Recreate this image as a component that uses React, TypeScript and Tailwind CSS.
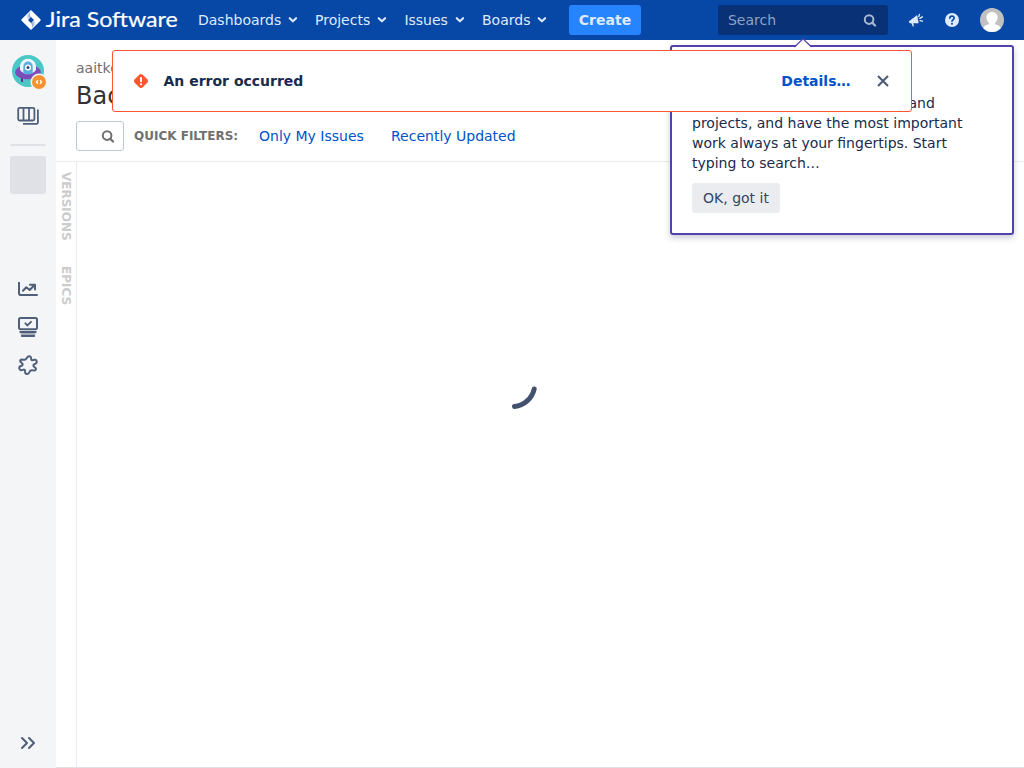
import React from "react";

function NavItem({ label, className }: { label: string; className: string }) {
  return (
    <div className={`flex h-10 shrink-0 items-center justify-between text-[14px] text-[#deebff] ${className}`}>
      <span>{label}</span>
      <svg width="10" height="10" viewBox="0 0 10 10" fill="none" stroke="#deebff" strokeWidth="2.1" strokeLinecap="round" strokeLinejoin="round">
        <path d="M1.7 3.2 4.9 6.3 8.1 3.2" />
      </svg>
    </div>
  );
}

function SearchIcon({ color }: { color: string }) {
  return (
    <svg width="14" height="14" viewBox="0 0 14 14" fill="none" stroke={color} strokeWidth="2" strokeLinecap="round">
      <circle cx="6.1" cy="6.6" r="4.3" />
      <path d="M9.3 9.8 12 12.5" strokeWidth="2.3" />
    </svg>
  );
}

function Logo() {
  return (
    <div className="flex h-10 w-[177px] shrink-0 items-center pl-[21px]">
      <svg width="20" height="20" viewBox="0 0 20 20" className="shrink-0">
        <defs>
          <linearGradient id="fade-a" x1="1" y1="0.4" x2="0" y2="0.7">
            <stop offset="0" stopColor="#0747a6" />
            <stop offset="1" stopColor="#ffffff" />
          </linearGradient>
          <linearGradient id="fade-b" x1="0" y1="0.6" x2="1" y2="0.3">
            <stop offset="0" stopColor="#0747a6" />
            <stop offset="1" stopColor="#ffffff" />
          </linearGradient>
        </defs>
        <path fill="#fff" d="M10 0 19.4 9.3Q20 10 19.4 10.7L10 20 .6 10.7Q0 10 .6 9.3ZM10 7 7 10 10 13 13 10Z" />
        <path fill="url(#fade-a)" d="M10 7Q7.8 4.8 9.6 1.8L5 6.4 7 10Z" opacity="0.6" />
        <path fill="url(#fade-b)" d="M10 13Q12.2 15.2 10.4 18.2L15 13.6 13 10Z" opacity="0.6" />
      </svg>
      <svg width="138" height="32" viewBox="0 0 138 32" className="shrink-0 overflow-visible">
        <text x="4.8" y="23" fill="#fff" stroke="#fff" strokeWidth="0.2" textLength="132" lengthAdjust="spacingAndGlyphs" className="font-['Lato',sans-serif] text-[22px]">
          Jira Software
        </text>
      </svg>
    </div>
  );
}

function Header() {
  return (
    <header className="flex h-10 shrink-0 items-center bg-[#0747a6]">
      <Logo />
      <NavItem label="Dashboards" className="ml-[21px] w-[100px]" />
      <NavItem label="Projects" className="ml-[17px] w-[72px]" />
      <NavItem label="Issues" className="ml-[17.4px] w-[60.6px]" />
      <NavItem label="Boards" className="ml-[17px] w-[65px]" />
      <button className="ml-[22px] h-[30px] w-[72px] shrink-0 rounded-[3px] bg-[#2684ff] text-[14px] font-bold text-[#deebff]">Create</button>
      <div className="ml-[77px] flex h-[30px] w-[170px] shrink-0 items-center justify-between rounded-[3px] bg-[#093176] pr-[11px] pl-[10px] text-[14px] text-[#8ca3c8]">
        <span>Search</span>
        <SearchIcon color="#a6b8d5" />
      </div>
      <svg width="16" height="16" viewBox="0 0 16 16" className="ml-5 shrink-0" fill="#deebff">
        <path d="M1 9.6 9 3.6 10.3 11 1.8 10.9Z" stroke="#deebff" strokeWidth="0.6" strokeLinejoin="round" />
        <path d="M3.4 11 5 11 6 14.2 4.7 14.5Z" />
        <path d="M10.8 4.6 11.5 2.4M11.9 6.3 14.3 4.8M12.1 8.6 14.5 9.1" stroke="#deebff" strokeWidth="1.4" strokeLinecap="round" />
      </svg>
      <svg width="14" height="14" viewBox="0 0 14 14" className="ml-[21px] shrink-0">
        <circle cx="7" cy="7" r="7" fill="#deebff" />
        <path d="M4.8 5.3C4.8 2.4 9.2 2.4 9.2 5.1 9.2 6.8 7 6.7 7 8.3" fill="none" stroke="#0747a6" strokeWidth="1.6" strokeLinecap="round" />
        <circle cx="7" cy="10.8" r="1" fill="#0747a6" />
      </svg>
      <svg width="24" height="24" viewBox="0 0 24 24" className="ml-[21px] shrink-0">
        <defs>
          <clipPath id="avatar-round"><circle cx="12" cy="12" r="12" /></clipPath>
        </defs>
        <g clipPath="url(#avatar-round)">
          <rect width="24" height="24" fill="#c1c1c1" />
          <path d="M12 4C8.3 4 6.3 6.6 6.4 9.6 6.5 12.1 7.8 14 9 15.2V16.3C6.5 17.1 4 17.6 3.3 20V24H20.7V20C20 17.6 17.5 17.1 15 16.3V15.2C16.2 14 17.5 12.1 17.6 9.6 17.7 6.6 15.7 4 12 4Z" fill="#fff" />
        </g>
      </svg>
    </header>
  );
}

function ProjectAvatar() {
  return (
    <svg width="36" height="36" viewBox="0 0 36 36" className="mt-[14px] ml-1 shrink-0">
      <circle cx="16" cy="17" r="16" fill="#4bc8c5" />
      <path d="M10 22V28M21.5 24 22 28" stroke="#5b3399" strokeWidth="2" />
      <path d="M8 12.5C4.7 14 3 16.5 3.2 18.7 3.5 22.8 9.5 25.2 16 25.2S28.5 22.8 28.8 18.7C29 16.5 27.3 14 24 12.5Z" fill="#7e4cba" />
      <path d="M8 12A8 7.2 0 0 1 24 12V15.6Q22.5 19.5 16 19.9 9.5 19.5 8 15.6Z" fill="#edf4fb" />
      <path d="M11.3 19.5V12.4A4.7 4.8 0 0 1 20.7 12.4V19.5Q16 21.4 11.3 19.5Z" fill="#5aaddf" />
      <circle cx="16" cy="13.5" r="3" fill="#fff" />
      <circle cx="16" cy="13.5" r="1.5" fill="#244a6d" />
      <circle cx="27" cy="28" r="8.5" fill="#f4f5f7" />
      <circle cx="27" cy="28" r="7" fill="#f7922e" />
      <path d="M26 26.1 24.4 28 26 29.9M28 26.1 29.6 28 28 29.9" fill="none" stroke="#fff" strokeWidth="1.3" />
    </svg>
  );
}

function Sidebar() {
  return (
    <aside className="flex w-14 shrink-0 flex-col items-center bg-[#f4f5f7]">
      <ProjectAvatar />
      <svg width="24" height="20" viewBox="0 0 24 20" className="mt-4 shrink-0" fill="none" stroke="#505f79" strokeWidth="1.8">
        <rect x="2.2" y="1.8" width="16.2" height="12.7" rx="1.4" />
        <path d="M7.5 2V14.5M13 2V14.5M21.9 3.5V16.4Q21.9 17.9 20.4 17.9H7" />
      </svg>
      <div className="mt-[18px] h-0.5 w-9 shrink-0 rounded-full bg-[#dfe1e6]" />
      <div className="mt-[10px] h-[38px] w-9 shrink-0 rounded-[3px] bg-[#dfe1e6]" />
      <svg width="24" height="24" viewBox="0 0 24 24" className="mt-[83px] shrink-0" fill="none" stroke="#505f79" strokeWidth="2" strokeLinecap="round">
        <path d="M3 5.7V16.2Q3 18 4.8 18H21" />
        <path d="M7 13.8 10.3 10.2 13.7 13 18.6 8M14 7.7H19V12.4" strokeLinejoin="round" />
      </svg>
      <svg width="24" height="24" viewBox="0 0 24 24" className="mt-[14px] shrink-0" fill="none" stroke="#505f79" strokeLinecap="round">
        <rect x="3" y="3" width="18" height="11.2" rx="1.6" strokeWidth="2" />
        <path d="M9.4 8.4 11.4 10.4 15 6.9" strokeWidth="2" />
        <path d="M5.5 19H18.5" stroke="#a5adba" strokeWidth="2" />
        <path d="M4.3 17H19.7M5.8 21H18.2" strokeWidth="2" />
      </svg>
      <svg width="24" height="24" viewBox="0 0 24 24" className="mt-[14px] shrink-0" fill="none" stroke="#505f79" strokeWidth="2" strokeLinejoin="round">
        <path d="M11.3 4.2C12.2 2.6 14.9 3 15.1 5C15.1 6.5 15.2 7.5 16.8 7.2C18.6 6.1 20.3 6.7 20.7 8.3C21.1 10 20 10.7 18.4 11.1C17.1 11.6 17.1 12.8 18.1 13.8L19.6 15.1C20.3 15.9 19.9 17.2 18.8 17.4L16.6 17.2C15 17 14 17.4 13.6 18.8C13.1 20.3 12.4 21.3 10.8 21C9.2 20.8 8.8 19.6 9.1 18.2C9.2 16.9 8.3 16.3 7.1 16.8C5.2 17.6 3.7 17.2 3.3 15.6C3 14 4 13.1 5.6 12.8C7 12.2 6.9 11.1 5.8 10.1L4.5 8.8C3.8 8 4.2 6.8 5.4 6.6L7.7 6.8C9.3 7 10.1 6.6 10.5 5.4Z" />
      </svg>
      <svg width="16" height="14" viewBox="0 0 16 14" className="mt-auto mb-[18px] shrink-0" fill="none" stroke="#505f79" strokeWidth="2" strokeLinecap="round" strokeLinejoin="round">
        <path d="M2 2 7 7 2 12M9 2 14 7 9 12" />
      </svg>
    </aside>
  );
}

function Backlog() {
  return (
    <main className="flex min-w-0 flex-1 flex-col border-b border-[#dfe1e6]">
      <div className="flex h-[122px] shrink-0 flex-col border-b border-[#ebecf0] pl-5">
        <div className="mt-[18px] h-5 text-[14px] leading-5 text-[#707070]">aaitken</div>
        <h1 className="mt-1 h-7 text-[24px] leading-7 text-[#333]">Backlog</h1>
        <div className="mt-[11px] flex h-[30px] items-center text-[14px] text-[#0052cc]">
          <div className="flex h-[30px] w-12 items-center justify-end rounded-[3px] border border-[#c1c7d0] pr-2">
            <SearchIcon color="#707070" />
          </div>
          <span className="ml-[10px] w-[125px] text-[12px] font-bold text-[#707070]">QUICK FILTERS:</span>
          <span className="w-[132px]">Only My Issues</span>
          <span>Recently Updated</span>
        </div>
      </div>
      <div className="flex min-h-0 flex-1">
        <div className="flex w-[21px] shrink-0 flex-col border-r border-[#ebecf0] pt-[10px] text-[12px] font-bold text-[#ccc]">
          <span className="h-[94px] w-5 leading-5 [writing-mode:vertical-rl]">VERSIONS</span>
          <span className="w-5 leading-5 [writing-mode:vertical-rl]">EPICS</span>
        </div>
        <div className="flex-1 pt-[223px] pl-[434px]">
          <svg width="28" height="28" viewBox="0 0 28 28" fill="none" stroke="#42526e" strokeWidth="5" strokeLinecap="round">
            <path d="M3.5 21.5A22.5 22.5 0 0 0 23.2 4" />
          </svg>
        </div>
      </div>
    </main>
  );
}

function SearchHint() {
  return (
    <section className="absolute top-[45px] left-[670px] h-[190px] w-[344px] rounded-[3px] border-2 border-[#5243aa] bg-white px-5 pt-[46px] text-[14px] leading-5 text-[#172b4d] shadow-[0_3px_6px_rgba(9,30,66,0.22)]">
      <svg width="18" height="10" viewBox="0 0 18 10" className="absolute -top-[9px] left-[122px]">
        <path d="M1 9 9 1 17 9V10H1Z" fill="#fff" />
        <path d="M.5 9 9 .8 17.5 9" fill="none" stroke="#5243aa" strokeWidth="1.2" />
      </svg>
      <p className="indent-[216.5px]">
        and<br />projects, and have the most important<br />work always at your fingertips. Start<br />typing to search…
      </p>
      <button className="mt-[10px] h-[30px] w-[88px] rounded-[3px] bg-[#ebecf0] text-[#344563]">OK, got it</button>
    </section>
  );
}

function ErrorFlag() {
  return (
    <section className="absolute top-[50px] left-28 flex h-[62px] w-[800px] items-center rounded-[3px] border border-[#ff5630] bg-white text-[14px] font-bold">
      <svg width="16" height="16" viewBox="0 0 16 16" className="ml-5">
        <path d="M6.5 1.5Q8 .3 9.5 1.5L14.5 6.5Q15.7 8 14.5 9.5L9.5 14.5Q8 15.7 6.5 14.5L1.5 9.5Q.3 8 1.5 6.5Z" fill="#ff5630" />
        <path d="M8 5V8.2" stroke="#fff" strokeWidth="2" strokeLinecap="round" />
        <circle cx="8" cy="11.2" r="1.05" fill="#fff" />
      </svg>
      <span className="ml-[14.5px] text-[#172b4d]">An error occurred</span>
      <span className="ml-auto text-[#0052cc]">Details…</span>
      <svg width="12" height="12" viewBox="0 0 12 12" className="mr-[22px] ml-[26.5px]" stroke="#505f79" strokeWidth="2.2">
        <path d="M1 1 11 11M11 1 1 11" />
      </svg>
    </section>
  );
}

export default function App() {
  return (
    <div className="relative flex h-screen flex-col overflow-hidden bg-white font-['DejaVu_Sans',sans-serif]">
      <Header />
      <div className="flex min-h-0 flex-1">
        <Sidebar />
        <Backlog />
      </div>
      <SearchHint />
      <ErrorFlag />
    </div>
  );
}
